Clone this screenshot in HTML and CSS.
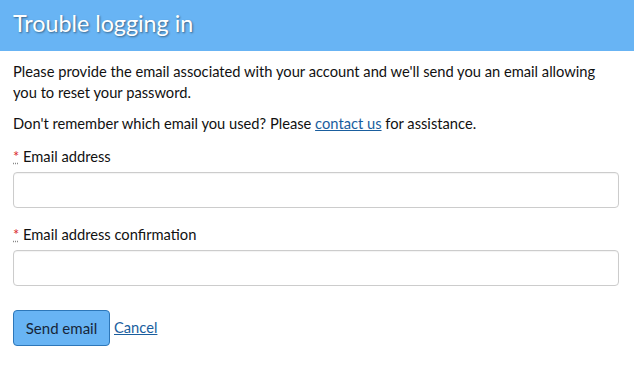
FILE: index.html
```html
<!DOCTYPE html>
<html lang="en">
<head>
    <meta charset="UTF-8">
    <meta name="viewport" content="width=device-width, initial-scale=1.0">
    <title>Trouble logging in</title>
    <link rel="stylesheet" href="styles.css">
</head>
<body>
    <div class="page-header">
        <h1>Trouble logging in</h1>
    </div>

    <div class="content">
        <p>Please provide the email associated with your account and we'll send you an email allowing you to reset your password.</p>
        <p>Don't remember which email you used? Please <a href="#">contact us</a> for assistance.</p>

        <form class="reset-form">
            <div class="field">
                <label for="email"><abbr title="required">*</abbr> Email address</label>
                <input type="email" id="email" name="email">
            </div>
            <div class="field">
                <label for="emailConfirm"><abbr title="required">*</abbr> Email address confirmation</label>
                <input type="email" id="emailConfirm" name="emailConfirm">
            </div>
            <div class="actions">
                <button type="submit">Send email</button><a href="#" class="cancel">Cancel</a>
            </div>
        </form>
    </div>
</body>
</html>
```

FILE: styles.css
```css
body {
    font-family: Lato, 'Open Sans', sans-serif;
    font-size: 14.7px;
    color: #111;
    margin: 0;
    background: white;
}
.page-header {
    background-color: #68b4f4;
    height: 51px;
    padding: 0 13px;
}
.page-header h1 {
    margin: 0;
    font-size: 23.3px;
    font-weight: 400;
    line-height: 47px;
    color: white;
    text-shadow: 1px 1px 2px rgba(0,0,0,0.45);
}
.content {
    padding: 10px 15px 0 13px;
}
.content p {
    margin: 0 0 10px 0;
    line-height: 21px;
}
a {
    color: #1a5e9e;
}
.field {
    margin-top: 12px;
}
.field + .field {
    margin-top: 16px;
}
label {
    display: block;
    line-height: 21px;
    margin-bottom: 5px;
}
abbr {
    color: #d9262c;
    text-decoration: underline dotted #888;
    border: none;
}
input {
    display: block;
    box-sizing: border-box;
    width: 100%;
    height: 36px;
    border: 1px solid #ccc;
    border-radius: 4px;
    box-shadow: inset 0 1px 1px rgba(0,0,0,0.05);
    font-size: 15px;
    padding: 6px 10px;
}
.actions {
    margin-top: 24px;
    display: flex;
    align-items: center;
}
button {
    background-color: #68b4f4;
    border: 1px solid #2d77b9;
    border-radius: 4px;
    color: #16263a;
    font-family: inherit;
    font-size: 15px;
    height: 36px;
    width: 97px;
    padding: 0;
    margin-right: 4px;
    cursor: pointer;
}
.cancel {
    line-height: 21px;
    margin-top: -1px;
}
```
